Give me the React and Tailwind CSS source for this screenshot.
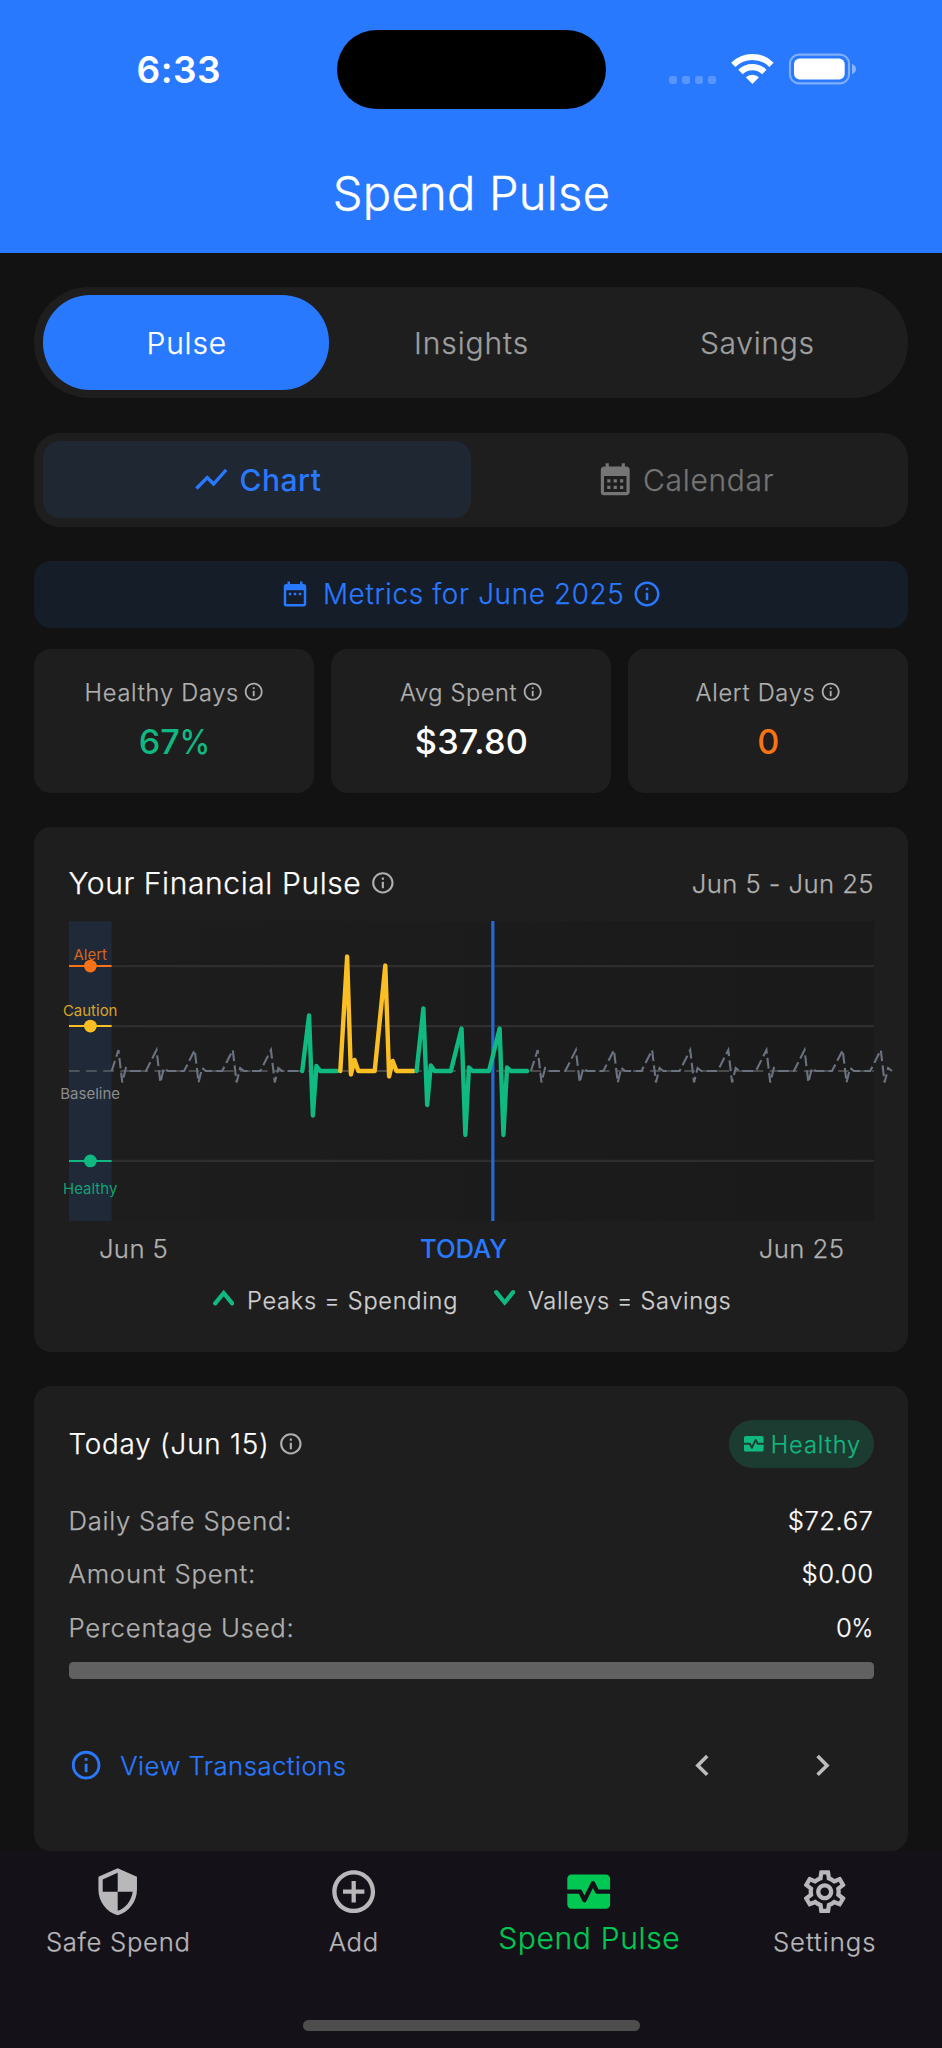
import React from "react";
import {
  MdShowChart,
  MdCalendarMonth,
  MdDateRange,
  MdInfoOutline,
  MdMonitorHeart,
  MdChevronLeft,
  MdChevronRight,
  MdSecurity,
  MdAddCircleOutline,
  MdOutlineSettings,
} from "react-icons/md";

const BASE = 1071;
const LEFT = 111.3;
const STEP = 38.14;

// Builds one continuous heartbeat line; each beat is { day, peak, trough, bump }.
function beatPath(beats, tail = 1) {
  return beats
    .map((b, i) => {
      const x = LEFT + STEP * b.day;
      const start = i === 0 ? `M${x.toFixed(1)} ${BASE}` : "";
      const end = i === beats.length - 1 ? tail : 0.9;
      return `${start} L${(x + 6.8).toFixed(1)} ${b.peak} L${(x + 10.6).toFixed(1)} ${b.trough} L${(x + 14.2).toFixed(1)} ${b.bump} L${(x + 18).toFixed(1)} ${BASE} L${(x + Math.max(18, STEP * end)).toFixed(1)} ${BASE}`;
    })
    .join(" ");
}

const quiet = (from, to) =>
  Array.from({ length: to - from + 1 }, (_, i) => ({ day: from + i, peak: 1050, trough: 1082.5, bump: 1068 }));

const SEGMENTS = [
  { color: "#10b981", tail: 0.92, beats: [{ day: 5, peak: 1015.5, trough: 1115.5, bump: 1066 }] },
  {
    color: "#fbbf24",
    tail: 0.92,
    beats: [
      { day: 6, peak: 956.5, trough: 1074.5, bump: 1060 },
      { day: 7, peak: 965.5, trough: 1076.5, bump: 1061 },
    ],
  },
  {
    color: "#10b981",
    tail: 0.9,
    beats: [
      { day: 8, peak: 1008.5, trough: 1105, bump: 1065.5 },
      { day: 9, peak: 1028.5, trough: 1135, bump: 1067.5 },
      { day: 10, peak: 1028.5, trough: 1135, bump: 1067.5 },
    ],
  },
];

const LEVELS = [
  { name: "Alert", line: 966, label: 960.4, color: "#f97316" },
  { name: "Caution", line: 1026, label: 1016.1, color: "#fbbf24" },
  { name: "Healthy", line: 1161, label: 1193.8, color: "#10b981" },
];

function PulseChart() {
  return (
    <svg className="block h-[300px] w-full overflow-visible" viewBox="68.6 921 805.5 300" fill="none">
      <defs>
        <linearGradient id="plot" x1="0" x2="1" y1="0" y2="0">
          <stop offset="0" stopColor="#1d1d1d" />
          <stop offset="1" stopColor="#1a1a1a" />
        </linearGradient>
      </defs>
      <rect x="68.6" y="921" width="805.5" height="300" fill="url(#plot)" />
      {LEVELS.map((l) => (
        <line key={l.name} x1="111.3" x2="874.1" y1={l.line} y2={l.line} stroke="#2e2e2e" strokeWidth="2.2" />
      ))}
      <rect x="68.6" y="921" width="42.7" height="300" fill="#1f2937" />
      <line x1="68.6" x2="874.1" y1={BASE} y2={BASE} stroke="#9e9e9e" strokeOpacity="0.36" strokeWidth="2.1" strokeDasharray="10.7 6.4" />
      {LEVELS.map((l) => (
        <g key={l.name}>
          <text x="89.8" y={l.label} textAnchor="middle" fill={l.color} fillOpacity="0.85" className="font-['Inter'] text-[15px] font-normal">
            {l.name}
          </text>
          <line x1="68.6" x2="111.3" y1={l.line} y2={l.line} stroke={l.color} strokeWidth="2.1" />
          <circle cx="90" cy={l.line} r="6.4" fill={l.color} />
        </g>
      ))}
      <text x="89.8" y="1099.4" textAnchor="middle" fill="#8c8c8c" className="font-['Inter'] text-[15px] font-normal">
        Baseline
      </text>
      <line x1="492.7" x2="492.7" y1="921" y2="1221" stroke="#2668d8" strokeWidth="3.2" />
      <path d={beatPath(quiet(0, 4))} stroke="#6b7280" strokeWidth="2.1" strokeDasharray="10.7 4.28" />
      <path d={beatPath(quiet(11, 20), 0)} stroke="#6b7280" strokeWidth="2.1" strokeDasharray="10.7 4.28" />
      {SEGMENTS.map((s) => (
        <path key={s.beats[0].day} d={beatPath(s.beats, s.tail)} stroke={s.color} strokeWidth="4.4" strokeLinecap="round" strokeLinejoin="round" />
      ))}
    </svg>
  );
}

function StatusIcons() {
  return (
    <svg className="h-[40px] w-[200px]" viewBox="664 49.7 200 40" fill="none">
      {[669, 682, 695, 708].map((x) => (
        <rect key={x} x={x} y="75.7" width="8" height="8" rx="2.4" fill="#fff" fillOpacity="0.22" />
      ))}
      <path d="M733.3 64.5a27 27 0 0 1 38.2 0" stroke="#fff" strokeWidth="6" />
      <path d="M740.5 71.7a16.8 16.8 0 0 1 23.8 0" stroke="#fff" strokeWidth="6.2" />
      <path d="M752.4 83.7l-6.6-6.7a9.6 9.6 0 0 1 13.2 0z" fill="#fff" />
      <rect x="790" y="54.3" width="59" height="28.8" rx="9" stroke="#fff" strokeOpacity="0.4" strokeWidth="2.1" />
      <rect x="794" y="58.3" width="50.7" height="20.8" rx="5.6" fill="#fff" />
      <path d="M852 63.7c2.6 1 4 2.8 4 5.1s-1.4 4.2-4 5.2z" fill="#fff" fillOpacity="0.45" />
    </svg>
  );
}

function Percent({ children }) {
  return (
    <>
      {children}
      <span className="-ml-[0.1em] inline-block origin-right scale-x-[0.9]">%</span>
    </>
  );
}

function Metric({ label, value, labelClass, valueClass }) {
  return (
    <div className="flex h-[143.7px] flex-1 flex-col items-center rounded-[17px] bg-[#1e1e1e] pt-[26px] pl-px">
      <div className="flex h-[34px] items-center gap-[4.3px] text-[#b0b0b0]">
        <span className={`pt-[2px] text-[23.55px] leading-[34px] font-light whitespace-nowrap ${labelClass}`}>{label}</span>
        <MdInfoOutline className="size-[21.4px]" />
      </div>
      <span className={`mt-[11px] text-[34.25px] leading-[44px] font-medium [-webkit-text-stroke:0px] ${valueClass}`}>{value}</span>
    </div>
  );
}

function Row({ label, value, labelClass, valueClass }) {
  return (
    <div className="flex h-[53.5px] items-center justify-between pt-px text-[25.7px] font-light">
      <span className={`text-[#b0b0b0] ${labelClass}`}>{label}</span>
      <span className={`text-white ${valueClass}`}>{value}</span>
    </div>
  );
}

function NavItem({ icon: Icon, label, active, labelClass }) {
  return (
    <div className={`flex flex-1 flex-col items-center pt-[14.8px] ${active ? "text-[#00c853]" : "text-[#b8b7ba]"}`}>
      <Icon className="size-[51.4px]" />
      <span className={`pl-px leading-[32px] font-light whitespace-nowrap ${active ? "mt-[5.2px] text-[30px]" : "mt-[8.7px] text-[25.7px]"} ${labelClass}`}>
        {label}
      </span>
    </div>
  );
}

export default function App() {
  return (
    <div className="flex h-[2048px] w-[942px] flex-col overflow-hidden bg-[#121212] font-['Inter',sans-serif] [-webkit-text-stroke:0.25px]">
      <header className="h-[252.7px] shrink-0 bg-[#2979ff] text-white">
        <div className="flex h-[139px] items-center">
          <div className="w-[336.8px] pl-[136.5px] text-[37px] font-semibold tracking-[0.5px] [-webkit-text-stroke:0px]">6:33</div>
          <div className="h-[78.6px] w-[269.2px] rounded-full bg-black" />
          <div className="flex flex-1 pl-[58px]">
            <StatusIcons />
          </div>
        </div>
        <h1 className="pl-px text-center text-[47.1px] leading-[108px] font-light tracking-[0.26px] [-webkit-text-stroke:0.4px]">Spend Pulse</h1>
      </header>

      <main className="flex flex-1 flex-col px-[34.25px] pt-[34.25px]">
        <div className="flex h-[111.5px] shrink-0 rounded-[55px] bg-[#1e1e1e] p-[8.56px] text-[30px] font-light text-[#9e9e9e]">
          <div className="flex flex-1 items-center justify-center rounded-[47px] bg-[#2979ff] pt-[2px] pl-[2px] tracking-[0.8px] text-white">Pulse</div>
          <div className="flex flex-1 items-center justify-center pt-[2px] pl-px tracking-[0.9px]">Insights</div>
          <div className="flex flex-1 items-center justify-center pt-[2px] pl-[2px] tracking-[0.7px]">Savings</div>
        </div>

        <div className="mt-[34.3px] flex h-[94px] shrink-0 rounded-[25.7px] bg-[#1e1e1e] p-[8.56px] text-[30px]">
          <div className="flex flex-1 items-center justify-center gap-[8.5px] rounded-[17px] bg-[#1f2733] font-medium tracking-[0.5px] text-[#2979ff] [-webkit-text-stroke:0px]">
            <MdShowChart className="size-[38.5px]" />
            <span className="pt-[2px]">Chart</span>
          </div>
          <div className="flex flex-1 items-center justify-center gap-[8.5px] font-light tracking-[0.66px] text-[#757575]">
            <MdCalendarMonth className="size-[38.5px]" />
            <span className="pt-[2px]">Calendar</span>
          </div>
        </div>

        <div className="mt-[34.25px] flex h-[66.6px] shrink-0 items-center justify-center rounded-[17px] bg-[#141d28] text-[#2979ff]">
          <MdDateRange className="size-[30px]" />
          <span className="mr-[8px] ml-[13.4px] pt-[2px] text-[27.8px] font-light tracking-[0.68px]">Metrics for June 2025</span>
          <MdInfoOutline className="size-[30px]" />
        </div>

        <div className="mt-[21.4px] flex shrink-0 gap-[17.1px]">
          <Metric label="Healthy Days" value={<Percent>67</Percent>} labelClass="tracking-[0.78px]" valueClass="text-[#10b981]" />
          <Metric label="Avg Spent" value="$37.80" labelClass="tracking-[0.65px]" valueClass="tracking-[0.2px] text-white" />
          <Metric label="Alert Days" value="0" labelClass="tracking-[0.78px]" valueClass="text-[#f97316]" />
        </div>

        <section className="mt-[34.25px] h-[524.8px] shrink-0 rounded-[17px] bg-[#1e1e1e] px-[34.25px] pt-[34px]">
          <div className="flex h-[43px] items-center justify-between">
            <div className="flex items-center gap-[8.6px]">
              <h2 className="pt-[2px] text-[30px] font-light tracking-[0.6px] text-white">Your Financial Pulse</h2>
              <MdInfoOutline className="size-[25.7px] text-[#b0b0b0]" />
            </div>
            <span className="-mr-[0.5px] pt-[3px] text-[25.7px] font-light tracking-[0.42px] text-[#b0b0b0]">Jun 5 - Jun 25</span>
          </div>
          <div className="mt-[17px]">
            <PulseChart />
          </div>
          <div className="mt-[11px] flex h-[34px] items-center justify-between pr-[29.2px] pl-[30.4px] text-[25.7px] font-light tracking-[0.42px] text-[#b0b0b0]">
            <span>Jun 5</span>
            <span className="font-medium tracking-[-0.1px] text-[#2979ff] [-webkit-text-stroke:0px]">TODAY</span>
            <span>Jun 25</span>
          </div>
          <div className="mt-[17px] flex h-[36px] items-center justify-center gap-[35.5px] pl-[2px] text-[23.55px] font-light text-[#d0d0d0]">
            <div className="flex items-center gap-[13px]">
              <svg className="mb-[7px] h-[17px] w-[21.4px]" viewBox="0 0 21.4 17" fill="none">
                <path d="M2.2 14.3 10.7 4l8.5 10.3" stroke="#10b981" strokeWidth="4.3" strokeLinecap="round" />
              </svg>
              <span className="tracking-[0.76px]">Peaks = Spending</span>
            </div>
            <div className="flex items-center gap-[13px]">
              <svg className="mb-[7px] h-[17px] w-[21.4px]" viewBox="0 0 21.4 17" fill="none">
                <path d="M2.2 3.2 10.7 13.5l8.5-10.3" stroke="#10b981" strokeWidth="4.3" strokeLinecap="round" />
              </svg>
              <span className="tracking-[0.68px]">Valleys = Savings</span>
            </div>
          </div>
        </section>

        <section className="mt-[34.25px] h-[464.8px] shrink-0 rounded-[17px] bg-[#1e1e1e] px-[34.25px] pt-[34.2px]">
          <div className="flex h-[47.4px] items-center justify-between">
            <div className="flex items-center gap-[8.5px]">
              <h2 className="pt-[2px] text-[27.8px] font-light tracking-[0.8px] text-white">Today (Jun 15)</h2>
              <MdInfoOutline className="size-[25.7px] text-[#b0b0b0]" />
            </div>
            <div className="flex h-full items-center gap-[5.3px] rounded-full bg-[#1c3c31] pr-[12.4px] pl-[12.8px] text-[#10b981]">
              <MdMonitorHeart className="size-[23.55px]" />
              <span className="pt-[2px] text-[23.55px] font-light tracking-[0.95px]">Healthy</span>
            </div>
          </div>
          <div className="mt-[26.4px]">
            <Row label="Daily Safe Spend:" value="$72.67" labelClass="tracking-[0.73px]" valueClass="tracking-[0.5px]" />
            <Row label="Amount Spent:" value="$0.00" labelClass="tracking-[0.83px]" valueClass="tracking-[0.45px]" />
            <Row label="Percentage Used:" value={<Percent>0</Percent>} labelClass="tracking-[0.8px]" valueClass="tracking-[0.1px]" />
          </div>
          <div className="mt-[7.6px] h-[17.4px] rounded-[4.3px] bg-[#616161]" />
          <div className="mt-[56px] flex h-[60px] items-center justify-between pr-[29.8px]">
            <div className="flex items-center gap-[17.5px] text-[#2979ff]">
              <MdInfoOutline className="size-[34.25px]" />
              <span className="pt-[2px] text-[25.7px] font-light tracking-[0.47px]">View Transactions</span>
            </div>
            <div className="flex gap-[77px] text-[#bdbdbd]">
              <MdChevronLeft className="size-[42.8px]" />
              <MdChevronRight className="size-[42.8px]" />
            </div>
          </div>
        </section>
      </main>

      <nav className="flex h-[197.2px] shrink-0 flex-col items-center bg-[#141118]">
        <div className="flex h-[169.2px] w-full">
          <NavItem icon={MdSecurity} label="Safe Spend" labelClass="tracking-[0.68px]" />
          <NavItem icon={MdAddCircleOutline} label="Add" labelClass="tracking-[0.6px]" />
          <NavItem icon={MdMonitorHeart} label="Spend Pulse" labelClass="tracking-[0.66px]" active />
          <NavItem icon={MdOutlineSettings} label="Settings" labelClass="tracking-[1px]" />
        </div>
        <div className="ml-px h-[11px] w-[336.4px] rounded-full bg-[#4d4d4d]" />
      </nav>
    </div>
  );
}
